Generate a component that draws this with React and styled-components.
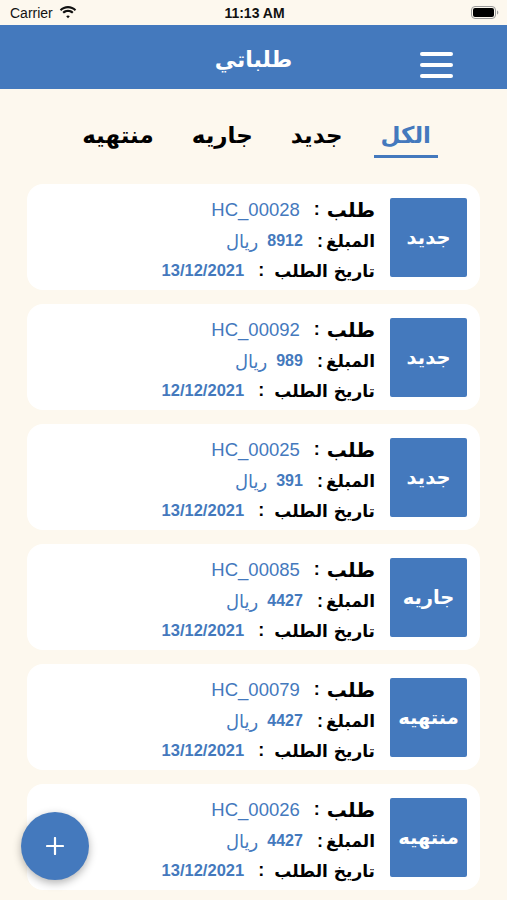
import * as React from 'react'
import styled, { createGlobalStyle } from 'styled-components'

const blue = '#4479bd';

const GlobalStyle = createGlobalStyle`
  html, body {
    margin: 0;
    padding: 0;
    background: #fdf8ee;
  }
  body {
    font-family: "Liberation Sans", "DejaVu Sans", sans-serif;
  }
`;

const Screen = styled.div`
  position: relative;
  width: 507px;
  height: 900px;
  overflow: hidden;
  background: #fdf8ee;
`;

const StatusBar = styled.div`
  height: 25px;
  display: flex;
  align-items: center;
  justify-content: space-between;
  padding: 0 8px 0 10px;
  font-size: 14px;
  color: #111;
`;

const Carrier = styled.div`
  display: flex;
  align-items: center;
  gap: 6px;
  width: 120px;
`;

const Clock = styled.div`
  font-weight: bold;
  font-size: 14px;
`;

const BatteryWrap = styled.div`
  width: 120px;
  display: flex;
  justify-content: flex-end;
`;

const Header = styled.header`
  height: 64px;
  background: ${blue};
  display: flex;
  align-items: center;
  justify-content: center;
  position: relative;
`;

const Title = styled.h1`
  margin: 5px 0 0;
  color: #fff;
  font-family: "DejaVu Sans", sans-serif;
  font-size: 22px;
  font-weight: bold;
`;

const MenuButton = styled.button`
  position: absolute;
  right: 54px;
  top: 27px;
  width: 33px;
  padding: 0;
  border: 0;
  background: none;
  display: flex;
  flex-direction: column;
  gap: 7px;
`;

const MenuLine = styled.span`
  display: block;
  height: 4px;
  border-radius: 2px;
  background: #fff;
`;

const Tabs = styled.nav`
  direction: rtl;
  display: flex;
  gap: 24px;
  padding: 26px 69px 0 0;
  height: 70px;
  box-sizing: border-box;
`;

const Tab = styled.div`
  padding: 0 7px;
  height: 43px;
  display: flex;
  align-items: center;
  font-family: "DejaVu Sans", sans-serif;
  font-size: 23px;
  font-weight: bold;
  color: ${p => (p.$active ? blue : '#000')};
  border-bottom: 3px solid ${p => (p.$active ? blue : 'transparent')};
  box-sizing: border-box;
`;

const List = styled.div`
  display: flex;
  flex-direction: column;
  gap: 14px;
  padding: 25px 27px 0;
`;

const Card = styled.div`
  direction: rtl;
  background: #fff;
  border-radius: 16px;
  height: 106px;
  box-sizing: border-box;
  padding: 13px 13px;
  display: flex;
  align-items: center;
  gap: 15px;
`;

const StatusBox = styled.div`
  width: 77px;
  height: 79px;
  flex-shrink: 0;
  background: ${blue};
  border-radius: 2px;
  display: flex;
  align-items: center;
  justify-content: center;
  color: #fff;
  font-family: "DejaVu Sans", sans-serif;
  font-size: 19.5px;
  font-weight: bold;
`;

const Info = styled.div`
  display: flex;
  flex-direction: column;
  padding-top: 4px;
`;

const Row = styled.div`
  display: flex;
  align-items: center;
  height: ${p => p.$h || 30}px;
`;

const Label = styled.span`
  font-family: "DejaVu Sans", sans-serif;
  font-weight: bold;
  font-size: ${p => (p.$big ? '20px' : '17px')};
  color: #000;
`;

const Colon = styled.span`
  font-family: "Liberation Sans", sans-serif;
  font-weight: bold;
  font-size: 18px;
  margin: 0 ${p => p.$right || 6}px 0 ${p => p.$left || 12}px;
  color: #000;
`;

const Value = styled.span`
  direction: ltr;
  font-family: "Liberation Sans", sans-serif;
  font-size: ${p => p.$size || 16}px;
  font-weight: ${p => (p.$bold ? 'bold' : 'normal')};
  color: ${blue};
`;

const Currency = styled.span`
  font-family: "DejaVu Sans", sans-serif;
  font-size: 18px;
  color: ${blue};
  margin-right: 9px;
`;

const Fab = styled.button`
  position: absolute;
  left: 21px;
  top: 812px;
  width: 68px;
  height: 68px;
  border-radius: 50%;
  border: 0;
  background: ${blue};
  box-shadow: 0 3px 8px rgba(0, 0, 0, 0.3);
  display: flex;
  align-items: center;
  justify-content: center;
`;

const orders = [
  { id: 'HC_00028', amount: '8912', date: '13/12/2021', status: 'جديد' },
  { id: 'HC_00092', amount: '989', date: '12/12/2021', status: 'جديد' },
  { id: 'HC_00025', amount: '391', date: '13/12/2021', status: 'جديد' },
  { id: 'HC_00085', amount: '4427', date: '13/12/2021', status: 'جاريه' },
  { id: 'HC_00079', amount: '4427', date: '13/12/2021', status: 'منتهيه' },
  { id: 'HC_00026', amount: '4427', date: '13/12/2021', status: 'منتهيه' },
];

const tabs = ['الكل', 'جديد', 'جاريه', 'منتهيه'];

const Wifi = () => (
  <svg width="18" height="13" viewBox="0 0 18 13">
    <path d="M9 2.2c2.6 0 5 1 6.8 2.7l1.4-1.5C15 1.3 12.1 0 9 0S3 1.3.8 3.4l1.4 1.5C4 3.2 6.4 2.2 9 2.2z" fill="#111" />
    <path d="M9 5.9c1.6 0 3 .6 4.1 1.6l1.4-1.5C13.1 4.6 11.1 3.8 9 3.8S4.9 4.6 3.5 6l1.4 1.5C6 6.5 7.4 5.9 9 5.9z" fill="#111" />
    <path d="M9 9.5c.7 0 1.3.3 1.8.7L9 12.2l-1.8-2c.5-.4 1.1-.7 1.8-.7z" fill="#111" />
  </svg>
);

const Battery = () => (
  <svg width="28" height="13" viewBox="0 0 28 13">
    <rect x="0.5" y="0.5" width="24" height="12" rx="3.5" fill="none" stroke="#999" />
    <rect x="2" y="2" width="21" height="9" rx="2" fill="#000" />
    <path d="M26 4.5v4c.8-.3 1.3-1.1 1.3-2s-.5-1.7-1.3-2z" fill="#999" />
  </svg>
);

const App = () => {
  return (
    <Screen>
      <GlobalStyle />
      <StatusBar>
        <Carrier>Carrier <Wifi /></Carrier>
        <Clock>11:13 AM</Clock>
        <BatteryWrap><Battery /></BatteryWrap>
      </StatusBar>
      <Header>
        <Title>طلباتي</Title>
        <MenuButton aria-label="menu">
          <MenuLine />
          <MenuLine />
          <MenuLine />
        </MenuButton>
      </Header>
      <Tabs>
        {tabs.map((t, i) => (
          <Tab key={t} $active={i === 0}>{t}</Tab>
        ))}
      </Tabs>
      <List>
        {orders.map(o => (
          <Card key={o.id}>
            <StatusBox>{o.status}</StatusBox>
            <Info>
              <Row $h={32}>
                <Label $big>طلب</Label>
                <Colon $right={7} $left={14}>:</Colon>
                <Value $size={18.5}>{o.id}</Value>
              </Row>
              <Row $h={31}>
                <Label>المبلغ</Label>
                <Colon $right={3} $left={14}>:</Colon>
                <Value $bold>{o.amount}</Value>
                <Currency>ريال</Currency>
              </Row>
              <Row $h={28}>
                <Label>تاريخ الطلب</Label>
                <Colon $right={10} $left={14}>:</Colon>
                <Value $bold $size={16.5}>{o.date}</Value>
              </Row>
            </Info>
          </Card>
        ))}
      </List>
      <Fab aria-label="add">
        <svg width="18" height="18" viewBox="0 0 18 18">
          <path d="M9 1v16M1 9h16" stroke="#fff" strokeWidth="2.2" strokeLinecap="round" />
        </svg>
      </Fab>
    </Screen>
  )
}

export default App
